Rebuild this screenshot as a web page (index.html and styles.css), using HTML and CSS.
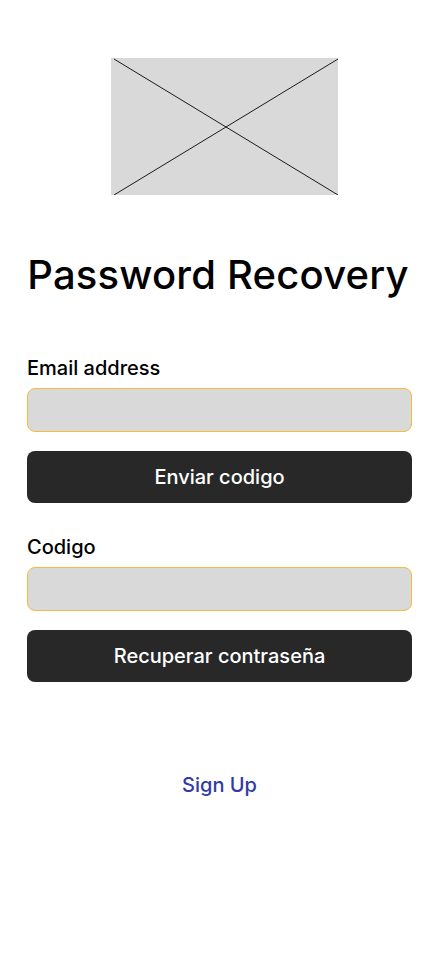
FILE: index.html
```html
<!DOCTYPE html>
<html lang="es">
<head>
<meta charset="utf-8">
<title>Password Recovery</title>
<link rel="stylesheet" href="styles.css">
</head>
<body>
<main class="page">
  <div class="logo">
    <svg viewBox="0 0 227 137" width="227" height="137" preserveAspectRatio="none">
      <rect x="0" y="0" width="227" height="137" fill="#d9d9d9"/>
      <line x1="3" y1="1" x2="227" y2="137" stroke="#1a1a1a" stroke-width="1"/>
      <line x1="3" y1="137" x2="227" y2="1" stroke="#1a1a1a" stroke-width="1"/>
    </svg>
  </div>
  <h1 class="title">Password Recovery</h1>
  <form class="form">
    <label class="label" for="email">Email address</label>
    <input class="field" id="email" type="email">
    <button class="btn" type="button">Enviar codigo</button>
    <label class="label label-second" for="code">Codigo</label>
    <input class="field" id="code" type="text">
    <button class="btn" type="button">Recuperar contraseña</button>
  </form>
  <a class="signup" href="#">Sign Up</a>
</main>
</body>
</html>
```
FILE: styles.css
```css
* { box-sizing: border-box; }
html, body { margin: 0; padding: 0; background: #fff; }
body { font-family: Inter, "Noto Sans", sans-serif; color: #000; }
.page {
  display: flex;
  flex-direction: column;
  padding: 58px 28px 0 27px;
  width: 440px;
}
.logo { display: flex; align-self: flex-start; margin-left: 84px; }
.logo svg { display: block; }
.title {
  margin: 56px 0 0 0;
  font-size: 40px;
  font-weight: 500;
  line-height: 48px;
  letter-spacing: 0.2px;
  text-align: center;
  padding-right: 3px;
  white-space: nowrap;
}
.form { display: flex; flex-direction: column; margin-top: 57px; }
.label {
  font-size: 20px;
  font-weight: 500;
  line-height: 24px;
  margin-bottom: 8px;
}
.label-second { margin-top: 32px; }
.field {
  height: 44px;
  width: 100%;
  background: #d9d9d9;
  border: 1px solid #f3be3a;
  border-radius: 8px;
  outline: none;
  font: inherit;
}
.btn {
  margin-top: 19px;
  height: 52px;
  width: 100%;
  background: #282828;
  color: #fff;
  border: none;
  border-radius: 8px;
  font-family: inherit;
  font-size: 20px;
  font-weight: 500;
}
.signup {
  align-self: center;
  margin-top: 91px;
  color: #2f3aa8;
  font-size: 20px;
  font-weight: 500;
  line-height: 24px;
  text-decoration: none;
}
```
